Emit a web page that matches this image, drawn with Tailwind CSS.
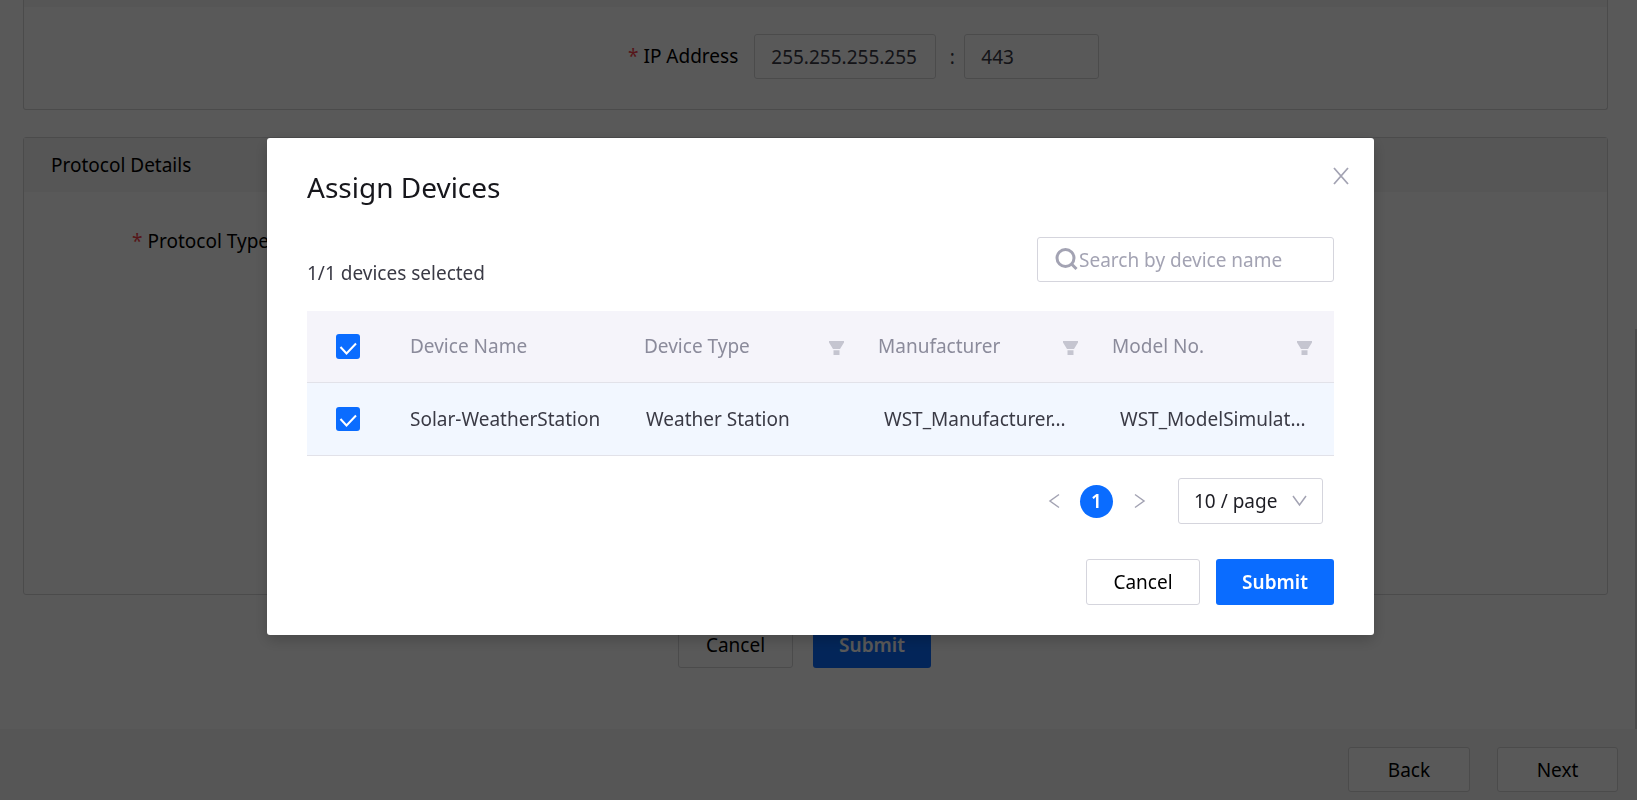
<!DOCTYPE html>
<html lang="en">
<head>
<meta charset="utf-8">
<title>Assign Devices</title>
<script src="https://cdn.jsdelivr.net/npm/@tailwindcss/browser@4"></script>
</head>
<body class="h-screen overflow-hidden bg-white font-['Noto_Sans',sans-serif] text-[19px] leading-7 text-[#1d1d24]">
<div class="flex h-full flex-col">
  <main class="flex min-h-0 flex-1 overflow-hidden">
    <div class="flex-1 pl-[23px] pr-[27px]">
      <section class="rounded-b-[3px] border border-t-0 border-[#d6d6d8] text-black">
        <div class="h-[7px] bg-[#f6f6f6]"></div>
        <div class="flex h-[102px] items-start pl-[604px] pt-[27px]">
          <label for="ip" class="flex h-11 items-center gap-[5px] text-black"><span class="text-[#f5414b]">*</span><span>IP Address</span></label>
          <input id="ip" value="255.255.255.255" class="ml-4 h-[45px] w-[182px] rounded-[3px] border border-[#d6d6d8] px-4 text-[#3a3a45]">
          <span class="flex h-[45px] w-7 items-center justify-center pl-1 text-[#3a3a45]">:</span>
          <input aria-label="Port" value="443" class="h-[45px] w-[135px] rounded-[3px] border border-[#d6d6d8] px-4 text-[#3a3a45]">
        </div>
      </section>
      <section class="mt-[27px] rounded-[3px] border border-[#d6d6d8] text-black">
        <h2 class="flex h-[54px] items-center bg-[#f6f6f6] pl-[27px]">Protocol Details</h2>
        <div class="h-[402px] pl-[108px] pt-[35px]">
          <div class="flex gap-[5px]"><span class="text-[#f5414b]">*</span><span>Protocol Type</span></div>
        </div>
      </section>
      <div class="mt-[27px] flex justify-center gap-5">
        <button class="h-[46px] w-[115px] rounded-[3px] border border-[#d6d6d8] text-black">Cancel</button>
        <button class="mr-[22px] h-[46px] w-[118px] rounded-[3px] bg-[#0a6cff] font-semibold text-white">Submit</button>
      </div>
    </div>
    <div class="flex w-[2px] items-end"><div class="h-[400px] w-full bg-[#d6d6d8]"></div></div>
  </main>
  <footer class="flex h-[71px] justify-end gap-[27px] bg-[#f6f6f6] pr-[19px] pt-[18px] text-black">
    <button class="h-[45px] w-[122px] rounded-[3px] border border-[#d6d6d8] bg-white">Back</button>
    <button class="h-[45px] w-[121px] rounded-[3px] border border-[#d6d6d8] bg-white">Next</button>
  </footer>
</div>

<div class="fixed inset-0 flex items-start justify-center bg-black/65 pl-1 pt-[138px]">
  <div role="dialog" aria-labelledby="title" class="relative w-full max-w-[1107px] rounded-[3px] bg-white px-10 pb-[30px] pt-[29px] shadow-[0_5px_15px_rgba(0,0,0,0.2)]">
    <button aria-label="Close" class="absolute right-[25px] top-[29px] text-[#a3a3b3]">
      <svg class="h-[18px] w-4" viewBox="0 0 16 18" fill="none" stroke="currentColor" stroke-width="1.8"><path d="M1 1l14 16M15 1L1 17"/></svg>
    </button>
    <h1 id="title" class="text-[28px] leading-10 text-[#17171c]">Assign Devices</h1>
    <div class="mt-[30px] flex items-start justify-between">
      <p class="mt-[22px] text-[#3a3a45]">1/1 devices selected</p>
      <label class="flex h-[45px] w-[297px] items-center rounded-[3px] border border-[#d5d5dd] pl-[17px] text-[#a3a3b3]">
        <svg class="h-[23px] w-[23px] shrink-0" viewBox="0 0 23 23" fill="none" stroke="currentColor" stroke-width="3"><circle cx="10.500" cy="10" r="8.500"/><path d="M16.500 16l5 5"/></svg>
        <input type="text" aria-label="Search by device name" placeholder="Search by device name" class="ml-px w-full min-w-0 outline-none placeholder:text-[#a3a3b3]">
      </label>
    </div>
    <table class="mt-6 w-full table-fixed text-left">
      <colgroup><col class="w-[81px]"><col><col><col><col><col class="w-[10px]"></colgroup>
      <thead>
        <tr class="h-[71px] border-b border-[#e2e2e9] bg-[#f5f4fa] text-[#8b8b9b]">
          <th class="p-0 pl-[29px]"><label class="relative block h-[25px] w-6"><input type="checkbox" checked aria-label="Select all devices" class="block h-[25px] w-6 appearance-none rounded-[3px] bg-[#0a6cff]"><svg class="absolute inset-0 h-[25px] w-6" viewBox="0 0 24 25" fill="none" stroke="#fff" stroke-width="2"><path d="M4.500 13l6 6.500L20 9.500"/></svg></label></th>
          <th class="p-0 pl-[22px] font-normal">Device Name</th>
          <th class="p-0 pl-[22px] pr-3 font-normal"><div class="flex items-center justify-between">Device Type<button aria-label="Filter device type" class="mt-1 text-[#c5c5d0]"><svg class="h-[14px] w-[15px]" viewBox="0 0 15 14" fill="currentColor"><path d="M0 0h15v1.500L11 8H4L0 1.500zM4.500 9.200h6V14h-6z"/></svg></button></div></th>
          <th class="p-0 pl-[22px] pr-3 font-normal"><div class="flex items-center justify-between">Manufacturer<button aria-label="Filter manufacturer" class="mt-1 text-[#c5c5d0]"><svg class="h-[14px] w-[15px]" viewBox="0 0 15 14" fill="currentColor"><path d="M0 0h15v1.500L11 8H4L0 1.500zM4.500 9.200h6V14h-6z"/></svg></button></div></th>
          <th class="p-0 pl-[22px] pr-3 font-normal"><div class="flex items-center justify-between">Model No.<button aria-label="Filter model number" class="mt-1 text-[#c5c5d0]"><svg class="h-[14px] w-[15px]" viewBox="0 0 15 14" fill="currentColor"><path d="M0 0h15v1.500L11 8H4L0 1.500zM4.500 9.200h6V14h-6z"/></svg></button></div></th>
          <th class="p-0"></th>
        </tr>
      </thead>
    </table>
    <table class="w-full table-fixed text-left">
      <colgroup><col class="w-[83px]"><col><col><col><col></colgroup>
      <tbody>
        <tr class="h-[73px] border-b border-[#e2e2e9] bg-[#f2f7ff] text-[#3a3a45]">
          <td class="p-0 pl-[29px]"><label class="relative block h-6 w-6"><input type="checkbox" checked aria-label="Select Solar-WeatherStation" class="block h-6 w-6 appearance-none rounded-[3px] bg-[#0a6cff]"><svg class="absolute inset-0 h-6 w-6" viewBox="0 0 24 24" fill="none" stroke="#fff" stroke-width="2"><path d="M4.500 12l6 6.500L20 8.500"/></svg></label></td>
          <td class="p-0 pl-5">Solar-WeatherStation</td>
          <td class="p-0 pl-5">Weather Station</td>
          <td class="p-0 pl-[22px]">WST_Manufacturer...</td>
          <td class="p-0 pl-[22px]">WST_ModelSimulat...</td>
        </tr>
      </tbody>
    </table>
    <nav aria-label="Pagination" class="mt-[22px] flex items-center justify-end pr-[11px] text-[#a3a3b3]">
      <button aria-label="Previous page"><svg class="h-4 w-3" viewBox="0 0 12 16" fill="none" stroke="currentColor" stroke-width="1.500"><path d="M11 1.500L2 8l9 6.500"/></svg></button>
      <button aria-current="page" class="ml-5 h-[33px] w-[33px] rounded-full bg-[#0a6cff] font-semibold text-white">1</button>
      <button aria-label="Next page" class="ml-[21px]"><svg class="h-4 w-3" viewBox="0 0 12 16" fill="none" stroke="currentColor" stroke-width="1.500"><path d="M1 1.500L10 8l-9 6.500"/></svg></button>
      <div class="relative ml-8">
        <select aria-label="Page size" class="block h-[46px] w-[145px] appearance-none rounded-[3px] border border-[#d5d5dd] pl-[15px] text-[#1d1d24]"><option>10 / page</option></select>
        <svg class="pointer-events-none absolute right-4 top-[17px] h-3 w-[15px]" viewBox="0 0 15 12" fill="none" stroke="currentColor" stroke-width="1.500"><path d="M1 1l6.500 9L14 1"/></svg>
      </div>
    </nav>
    <div class="mt-[35px] flex justify-end gap-4">
      <button class="h-[46px] w-[114px] rounded-[3px] border border-[#d5d5dd] text-black">Cancel</button>
      <button class="h-[46px] w-[118px] rounded-[3px] bg-[#0a6cff] font-semibold text-white">Submit</button>
    </div>
  </div>
</div>
</body>
</html>
